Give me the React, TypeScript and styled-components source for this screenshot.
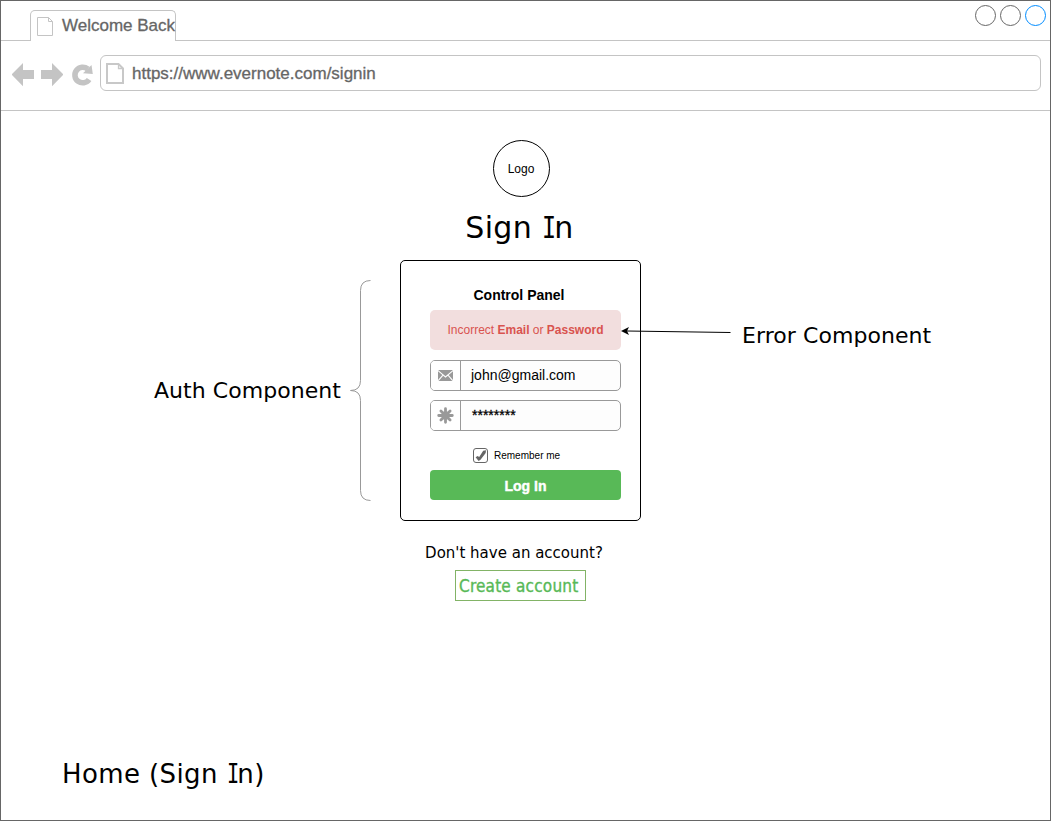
import React from "react";
import styled, { createGlobalStyle } from "styled-components";

const verdana = `Verdana, "DejaVu Sans", sans-serif`;
const arial = `"Liberation Sans", Arial, sans-serif`;

const GlobalStyle = createGlobalStyle`
  * { box-sizing: border-box; }
  body { margin: 0; background: #fff; }
  svg { display: block; flex: none; }
`;

const Window = styled.div`
  display: flex;
  flex-direction: column;
  width: 1051px;
  height: 821px;
  border: 1px solid #666;
  background: #fff;
  color: #000;
  font-family: ${arial};
  overflow: hidden;
`;

const TabBar = styled.header`
  display: flex;
  align-items: flex-end;
  justify-content: space-between;
  height: 40px;
  flex: none;
  padding-left: 29px;
  border-bottom: 1px solid #c4c4c4;
`;

const Tab = styled.div`
  display: flex;
  align-items: center;
  width: 146px;
  height: 31px;
  margin-bottom: -1px;
  padding: 0 0 0 6px;
  gap: 9px;
  border: 1px solid #c4c4c4;
  border-bottom: 0;
  border-radius: 5px 5px 0 0;
  background: #fff;
`;

const ChromeText = styled.span`
  font-size: 17px;
  line-height: 20px;
  color: #666;
  white-space: nowrap;
  -webkit-text-stroke: 0.3px #666;
`;

const WindowButtons = styled.div`
  display: flex;
  gap: 4px;
  align-self: flex-start;
  padding: 4px 4px 0 0;
`;

const WindowButton = styled.span<{ $color: string }>`
  width: 21px;
  height: 21px;
  border: 1px solid ${(p) => p.$color};
  border-radius: 50%;
`;

const Toolbar = styled.div`
  display: flex;
  align-items: flex-start;
  height: 70px;
  flex: none;
  padding: 14px 9px 0 11px;
  border-bottom: 1px solid #c4c4c4;
`;

const NavIcons = styled.div`
  display: flex;
  gap: 7px;
  width: 88px;
  padding-top: 8px;
`;

const AddressBar = styled.div`
  display: flex;
  align-items: center;
  flex: 1;
  height: 36px;
  padding-left: 5px;
  gap: 8px;
  border: 1px solid #c4c4c4;
  border-radius: 6px;

  ${ChromeText} { padding-top: 2px; }
`;

const Canvas = styled.main`
  display: flex;
  flex-direction: column;
  flex: 1;
`;

const Intro = styled.section`
  display: flex;
  flex-direction: column;
  align-items: center;
  width: 1041px;
  height: 149px;
  padding-top: 29px;
`;

const Logo = styled.div`
  display: flex;
  align-items: center;
  justify-content: center;
  width: 57px;
  height: 57px;
  padding-right: 1px;
  border: 1px solid #000;
  border-radius: 50%;
  font-size: 12px;
`;

const Title = styled.h1`
  margin: 13px 0 0;
  padding-right: 4px;
  font: 400 30px/36px ${verdana};
  letter-spacing: 0.35px;
`;

const CapitalI = styled.span`
  display: inline-block;
  font-family: "DejaVu Sans Mono", monospace;
  line-height: 1;
  letter-spacing: -0.19em;
  transform: scaleX(0.78);
  transform-origin: left;
`;

const Diagram = styled.section`
  display: grid;
  grid-template-columns: 399px 241px 1fr;
  height: 261px;
`;

const AuthNote = styled.div`
  display: flex;
  align-items: center;
  justify-content: flex-end;
  gap: 9px;
  height: 261px;
  padding-right: 29px;
`;

const NoteLabel = styled.span`
  font: 400 22px/28px ${verdana};
  letter-spacing: 0.06px;
  white-space: nowrap;
`;

const ErrorNote = styled.div`
  padding: 62px 0 0 101px;
`;

const Card = styled.form`
  position: relative;
  display: flex;
  flex-direction: column;
  height: 261px;
  padding: 26px 19px 0 29px;
  border: 1px solid #000;
  border-radius: 5px;
`;

const CardTitle = styled.h2`
  margin: 0;
  padding-right: 13px;
  text-align: center;
  font-size: 14px;
  line-height: 16px;
`;

const Alert = styled.div`
  height: 40px;
  margin-top: 7px;
  border-radius: 5px;
  background: #f2dede;
  color: #d9534f;
  font-size: 12px;
  line-height: 40px;
  text-align: center;
  white-space: nowrap;
`;

const Arrow = styled.svg`
  position: absolute;
  left: 220px;
  top: 64px;
`;

const Field = styled.div`
  display: flex;
  flex: none;
  height: 31px;
  margin-top: 9px;
  border: 1px solid #999;
  border-radius: 5px;
  background: #fdfdfd;
  overflow: hidden;

  ${Alert} + & { margin-top: 10px; }
`;

const FieldIcon = styled.span`
  display: flex;
  align-items: center;
  justify-content: center;
  width: 30px;
  border-right: 1px solid #999;
  background: #fff;
`;

const FieldValue = styled.span<{ $masked?: boolean }>`
  padding-left: ${(p) => (p.$masked ? 11 : 10)}px;
  font-size: 14px;
  line-height: 29px;
  -webkit-text-stroke: ${(p) => (p.$masked ? "0.3px #000" : "0")};
`;

const Remember = styled.label`
  display: flex;
  align-items: center;
  height: 15px;
  margin: 17px 0 7px 43px;
  gap: 6px;
  font-size: 10px;
`;

const CheckBox = styled.span`
  width: 15px;
  height: 15px;
  border: 1px solid #666;
  border-radius: 3px;
`;

const LoginButton = styled.div`
  height: 30px;
  border-radius: 4px;
  background: #58b957;
  color: #fff;
  font-size: 14px;
  font-weight: 700;
  line-height: 32px;
  text-align: center;
  -webkit-text-stroke: 0.4px #fff;
`;

const SignUp = styled.section`
  display: flex;
  flex-direction: column;
  align-items: center;
  width: 1039px;
  padding-top: 22px;
`;

const Question = styled.p`
  margin: 0;
  padding-right: 13px;
  font: 400 15px/20px ${verdana};
`;

const CreateLink = styled.a`
  width: 131px;
  height: 31px;
  margin-top: 7px;
  padding-left: 3px;
  border: 1px solid #82b366;
  color: #58b957;
  font: 400 17px/30px "DejaVu Sans Condensed", "DejaVu Sans", sans-serif;
  font-stretch: condensed;
  letter-spacing: 0.2px;
  white-space: nowrap;
  -webkit-text-stroke: 0.35px #58b957;
`;

const Caption = styled.h3`
  margin: auto 0 30px 61px;
  font: 400 26px/32px ${verdana};
  letter-spacing: 0.4px;
`;

const Brace = () => (
  <svg width="21" height="221" viewBox="0 0 21 221" fill="none" stroke="#999">
    <path d="M20.500.5Q10.500.5 10.500 10.500V100.500Q10.500 110.500.500 110.500Q10.500 110.500 10.500 120.500V210.500Q10.500 220.500 20.500 220.500" />
  </svg>
);

export default function App() {
  return (
    <Window>
      <GlobalStyle />
      <TabBar>
        <Tab>
          <svg width="16" height="19" viewBox="0 0 16 19" fill="none" stroke="#c4c4c4">
            <path d="M.5.5H11.500L15.500 4.500V18.500H.5ZM11.500.5V4.500H15.500" />
          </svg>
          <ChromeText>Welcome Back</ChromeText>
        </Tab>
        <WindowButtons>
          <WindowButton $color="#666" />
          <WindowButton $color="#666" />
          <WindowButton $color="#008cff" />
        </WindowButtons>
      </TabBar>
      <Toolbar>
        <NavIcons>
          <svg width="22" height="24" viewBox="0 0 22 24" fill="#c4c4c4">
            <path d="M-.5 11.500 11 0V7H22V16H11V23.300Z" />
          </svg>
          <svg width="22" height="24" viewBox="0 0 22 24" fill="#c4c4c4">
            <path d="M22.500 11.500 11 0V7H0V16H11V23.300Z" />
          </svg>
          <svg width="24" height="24" viewBox="0 0 24 24">
            <path d="M19.100 16.500A7.800 7.800 0 1 1 17.700 6" fill="none" stroke="#c4c4c4" strokeWidth="5.600" />
            <path d="M21.500 2 22.800 11 13 10.300Z" fill="#c4c4c4" />
          </svg>
        </NavIcons>
        <AddressBar>
          <svg width="18" height="21" viewBox="0 0 18 21" fill="none" stroke="#c8c8c8">
            <path strokeWidth="2" d="M1 1H12.500L17 5.500V20H1Z" />
            <path strokeWidth="1.300" d="M12.500 1V5.500H17" />
          </svg>
          <ChromeText>https://www.evernote.com/signin</ChromeText>
        </AddressBar>
      </Toolbar>
      <Canvas>
        <Intro>
          <Logo>Logo</Logo>
          <Title>
            Sign <CapitalI>I</CapitalI>n
          </Title>
        </Intro>
        <Diagram>
          <AuthNote>
            <NoteLabel>Auth Component</NoteLabel>
            <Brace />
          </AuthNote>
          <Card>
            <CardTitle>Control Panel</CardTitle>
            <Alert>
              Incorrect <b>Email</b> or <b>Password</b>
            </Alert>
            <Field>
              <FieldIcon>
                <svg width="15" height="11" viewBox="0 0 15 11">
                  <rect width="15" height="11" rx="1" fill="#999" />
                  <path d="M0 .6 7.500 7 15 .6M.2 10.600 5 5.200M14.800 10.600 10 5.200" fill="none" stroke="#fff" strokeWidth="1.100" />
                </svg>
              </FieldIcon>
              <FieldValue>john@gmail.com</FieldValue>
            </Field>
            <Field>
              <FieldIcon>
                <svg width="17" height="17" viewBox="0 0 17 17" stroke="#999" strokeWidth="2.800" strokeLinecap="round">
                  <circle cx="8.500" cy="8.500" r="4.200" fill="#999" stroke="none" />
                  <path d="M8.500 1.700V15.300M1.700 8.500H15.300M3.900 3.900 13.100 13.100M13.100 3.900 3.900 13.100" />
                </svg>
              </FieldIcon>
              <FieldValue $masked>********</FieldValue>
            </Field>
            <Remember>
              <CheckBox>
                <svg width="13" height="13" viewBox="0 0 13 13" fill="#666">
                  <path d="M1.600 8.300 3.600 6.900 5.200 8 9.200 1.800 12 1.200 11.700 4 6.500 10.800 4.600 12Z" />
                </svg>
              </CheckBox>
              Remember me
            </Remember>
            <LoginButton>Log In</LoginButton>
            <Arrow width="111" height="14" viewBox="0 0 111 14">
              <path d="M6 6 109.500 7.500" stroke="#000" fill="none" />
              <path d="M0 6 8 2 6 6 8 10Z" />
            </Arrow>
          </Card>
          <ErrorNote>
            <NoteLabel>Error Component</NoteLabel>
          </ErrorNote>
        </Diagram>
        <SignUp>
          <Question>Don't have an account?</Question>
          <CreateLink>Create account</CreateLink>
        </SignUp>
        <Caption>
          Home (Sign <CapitalI>I</CapitalI>n)
        </Caption>
      </Canvas>
    </Window>
  );
}
